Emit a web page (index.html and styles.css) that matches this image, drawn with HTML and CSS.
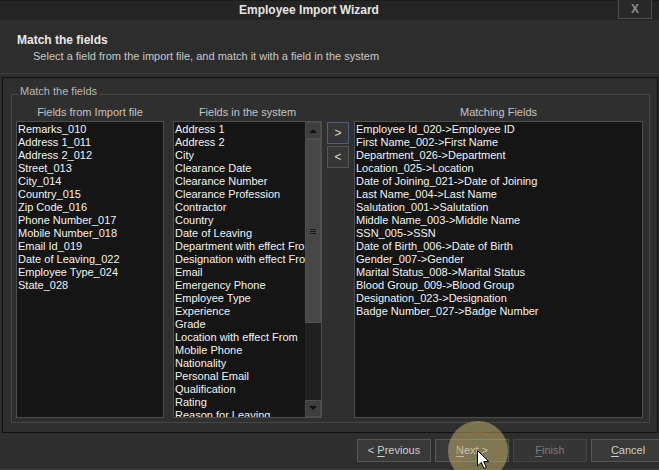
FILE: index.html
```html
<!DOCTYPE html>
<html>
<head>
<meta charset="utf-8">
<title>Employee Import Wizard</title>
<link rel="stylesheet" href="styles.css">
</head>
<body>
<div class="window">
  <div class="titlebar">
    <div class="title">Employee Import Wizard</div>
    <div class="close">X</div>
  </div>
  <div class="header">
    <div class="h-title">Match the fields</div>
    <div class="h-sub">Select a field from the import file, and match it with a field in the system</div>
  </div>
  <div class="panel">
    <fieldset class="group">
      <legend>Match the fields</legend>
      <div class="cols">
        <div class="col c1">
          <div class="colhead">Fields from Import file</div>
          <div class="list">
            <div class="items">
              <div>Remarks_010</div>
              <div>Address 1_011</div>
              <div>Address 2_012</div>
              <div>Street_013</div>
              <div>City_014</div>
              <div>Country_015</div>
              <div>Zip Code_016</div>
              <div>Phone Number_017</div>
              <div>Mobile Number_018</div>
              <div>Email Id_019</div>
              <div>Date of Leaving_022</div>
              <div>Employee Type_024</div>
              <div>State_028</div>
            </div>
          </div>
        </div>
        <div class="col c2">
          <div class="colhead">Fields in the system</div>
          <div class="list scroll">
            <div class="items">
              <div>Address 1</div>
              <div>Address 2</div>
              <div>City</div>
              <div>Clearance Date</div>
              <div>Clearance Number</div>
              <div>Clearance Profession</div>
              <div>Contractor</div>
              <div>Country</div>
              <div>Date of Leaving</div>
              <div>Department with effect From</div>
              <div>Designation with effect From</div>
              <div>Email</div>
              <div>Emergency Phone</div>
              <div>Employee Type</div>
              <div>Experience</div>
              <div>Grade</div>
              <div>Location with effect From</div>
              <div>Mobile Phone</div>
              <div>Nationality</div>
              <div>Personal Email</div>
              <div>Qualification</div>
              <div>Rating</div>
              <div>Reason for Leaving</div>
            </div>
            <div class="sbar">
              <div class="sbtn"><svg width="8" height="5" viewBox="0 0 8 5"><path d="M0 5 L4 1 L8 5 Z" fill="#111"/></svg></div>
              <div class="track">
                <div class="thumb"><span class="grip"></span></div>
              </div>
              <div class="sbtn down"><svg width="8" height="5" viewBox="0 0 8 5"><path d="M0 0 L4 4 L8 0 Z" fill="#111"/></svg></div>
            </div>
          </div>
        </div>
        <div class="movebtns">
          <div class="mbtn focus">&gt;</div>
          <div class="mbtn">&lt;</div>
        </div>
        <div class="col c3">
          <div class="colhead">Matching Fields</div>
          <div class="list">
            <div class="items">
              <div>Employee Id_020-&gt;Employee ID</div>
              <div>First Name_002-&gt;First Name</div>
              <div>Department_026-&gt;Department</div>
              <div>Location_025-&gt;Location</div>
              <div>Date of Joining_021-&gt;Date of Joining</div>
              <div>Last Name_004-&gt;Last Name</div>
              <div>Salutation_001-&gt;Salutation</div>
              <div>Middle Name_003-&gt;Middle Name</div>
              <div>SSN_005-&gt;SSN</div>
              <div>Date of Birth_006-&gt;Date of Birth</div>
              <div>Gender_007-&gt;Gender</div>
              <div>Marital Status_008-&gt;Marital Status</div>
              <div>Blood Group_009-&gt;Blood Group</div>
              <div>Designation_023-&gt;Designation</div>
              <div>Badge Number_027-&gt;Badge Number</div>
            </div>
          </div>
        </div>
      </div>
    </fieldset>
  </div>
  <div class="footer">
    <div class="btn">&lt; <u>P</u>revious</div>
    <div class="btn"><u>N</u>ext &gt;</div>
    <div class="btn disabled"><u>F</u>inish</div>
    <div class="btn"><u>C</u>ancel</div>
  </div>
  <div class="spot"></div>
  <div class="spot-ring"></div>
  <svg class="cursor" width="13" height="20" viewBox="0 0 13 20"><path d="M0.5 0.5 L0.5 16 L4.3 12.4 L6.9 18.5 L9.3 17.5 L6.8 11.6 L11.8 11.6 Z" fill="#fff" stroke="#000" stroke-width="1" stroke-linejoin="miter"/></svg>
</div>
</body>
</html>
```
FILE: styles.css
```css
* { box-sizing: border-box; }
html, body { margin: 0; padding: 0; }
body {
  width: 659px;
  height: 470px;
  overflow: hidden;
  background: #2d2d2d;
  font-family: "Liberation Sans", Arial, sans-serif;
  font-size: 11px;
  color: #e8e8e8;
}
.window {
  position: relative;
  width: 659px;
  height: 470px;
  display: flex;
  flex-direction: column;
  background: #2e2e2e;
}
.titlebar {
  height: 20px;
  display: flex;
  align-items: flex-start;
  background: #242424;
  border-top: 1px solid #1b1b1b;
}
.title {
  flex: 1;
  text-align: center;
  font-weight: bold;
  font-size: 12px;
  line-height: 19px;
  color: #e4e4e4;
}
.close {
  width: 34px;
  height: 19px;
  margin-top: -1px;
  margin-right: 7px;
  border: 1px solid #4e4e4e;
  border-top: none;
  background: #282828;
  color: #8c8c8c;
  font-weight: bold;
  font-size: 12px;
  line-height: 18px;
  text-align: center;
}
.header {
  height: 54px;
  padding: 13px 0 0 17px;
  background: #2d2d2d;
  border-bottom: 1px solid #3e3e3e;
}
.h-title {
  font-weight: bold;
  font-size: 12px;
  line-height: 15px;
  color: #e8e8e8;
}
.h-sub {
  margin-top: 2px;
  padding-left: 16px;
  line-height: 13px;
  color: #c8c8c8;
}
.panel {
  margin: 3px 0 0 2px;
  width: 656px;
  height: 356px;
  border: 1px solid #101010;
  padding: 7px 7px 9px 8px;
  background: #2f2f2f;
}
.group {
  margin: 0;
  height: 338px;
  border: 1px solid #474747;
  padding: 2px 6px 4px 4px;
}
.group legend {
  margin-left: 2px;
  padding: 0 2px 6px 2px;
  line-height: 13px;
  color: #b8b8b8;
}
.cols {
  display: flex;
  align-items: flex-start;
}
.col {
  display: flex;
  flex-direction: column;
}
.c1 { width: 148px; }
.c2 { width: 149px; margin-left: 9px; }
.c3 { width: 289px; margin-left: 5px; }
.colhead {
  height: 13px;
  line-height: 13px;
  text-align: center;
  color: #c4c4c4;
  margin-bottom: 2px;
}
.list {
  height: 297px;
  border: 1px solid #4f4f4f;
  background: #151515;
  overflow: hidden;
  display: flex;
}
.items {
  flex: 1;
  min-width: 0;
  padding: 1px 1px 0 1px;
  line-height: 13px;
  color: #f2f2f2;
  white-space: nowrap;
  overflow: hidden;
}
.sbar {
  width: 16px;
  display: flex;
  flex-direction: column;
  background: #222;
}
.sbtn {
  height: 17px;
  background: #3e3e3e;
  border: 1px solid #4c4c4c;
  display: flex;
  align-items: center;
  justify-content: center;
}
.track {
  flex: 1;
  background: #202020;
}
.thumb {
  height: 184px;
  background: #474747;
  border: 1px solid #515151;
  display: flex;
  align-items: center;
  justify-content: center;
}
.grip {
  width: 6px;
  height: 5px;
  border-top: 1px solid #1a1a1a;
  border-bottom: 1px solid #1a1a1a;
  background: linear-gradient(#1a1a1a, #1a1a1a) center / 6px 1px no-repeat;
}
.movebtns {
  width: 22px;
  margin-left: 5px;
  padding-top: 16px;
  display: flex;
  flex-direction: column;
  gap: 2px;
}
.mbtn {
  height: 22px;
  border: 1px solid #555;
  background: #363636;
  color: #d8d8d8;
  text-align: center;
  line-height: 20px;
  font-size: 12px;
}
.mbtn.focus { border-color: #4b5d80; }
.footer {
  flex: 1;
  display: flex;
  justify-content: flex-end;
  gap: 4px;
  padding-top: 6px;
  margin-right: -6px;
  border-bottom: 1px solid #3c3c3c;
}
.btn {
  width: 74px;
  height: 23px;
  border: 1px solid #565656;
  background: #393939;
  color: #cfcfcf;
  text-align: center;
  line-height: 21px;
}
.btn u { text-decoration: underline; text-underline-offset: 2px; }
.btn.disabled { color: #7a7a7a; border-color: #444; background: #353535; }
.spot {
  position: absolute;
  left: 448px;
  top: 421px;
  width: 60px;
  height: 60px;
  border-radius: 50%;
  background: rgba(200, 184, 112, 0.5);
}
.spot-ring {
  position: absolute;
  left: 457px;
  top: 432px;
  width: 42px;
  height: 42px;
  border-radius: 50%;
  border: 1px dotted #c06a2a;
}
.cursor {
  position: absolute;
  left: 477px;
  top: 450px;
}
```
